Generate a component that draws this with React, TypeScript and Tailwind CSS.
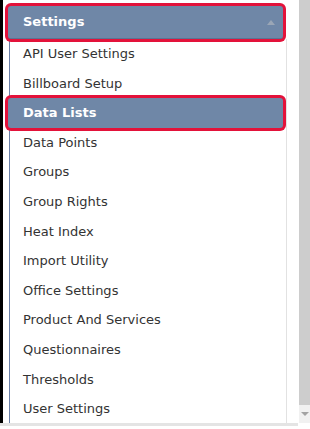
import React from 'react';

const items = [
  'API User Settings',
  'Billboard Setup',
  'Data Lists',
  'Data Points',
  'Groups',
  'Group Rights',
  'Heat Index',
  'Import Utility',
  'Office Settings',
  'Product And Services',
  'Questionnaires',
  'Thresholds',
  'User Settings',
];

const selected = 'Data Lists';

const App = () => {
  return (
    <div className="w-[310px] h-[429px] bg-white overflow-hidden" style={{ fontFamily: '"DejaVu Sans", Verdana, sans-serif' }}>
      <div className="flex h-[423px]">
        <div className="w-[3px] bg-black shrink-0" />
        <div className="w-[285px] pt-[6px] pl-[5px] shrink-0">
          <div className="relative w-[275px] h-[33px] bg-[#6f87a7] border-b border-[#5b7393] rounded-[3px] ring-[3px] ring-[#e3123a] flex items-center pl-[15px] pr-[8px] justify-between">
            <span className="text-white font-bold text-[13px]">Settings</span>
            <span className="w-0 h-0 border-l-[4px] border-r-[4px] border-b-[5px] border-l-transparent border-r-transparent border-b-[#9aa6b6]" />
          </div>
          <div className="ml-px w-[278px] border-l border-l-[#6b7fa6] border-r border-r-[#e2e2e2] h-[384px]">
            {items.map((item) =>
              item === selected ? (
                <div
                  key={item}
                  className="relative w-[275px] -ml-[2px] h-[29.6px] flex items-center pl-[15px] bg-[#6f87a7] rounded-[3px] ring-[3px] ring-[#e3123a]"
                >
                  <span className="text-white font-bold text-[13px]">{item}</span>
                </div>
              ) : (
                <div key={item} className="h-[29.6px] flex items-center pl-[13px]">
                  <span className="text-[#333] text-[13px]">{item}</span>
                </div>
              )
            )}
          </div>
        </div>
        <div className="flex-1" />
        <div className="w-[11px] flex flex-col bg-[#f1f1f1]">
          <div className="h-[405px] bg-[#cdcdcd]" />
          <div className="flex-1 flex items-center justify-center">
            <span className="w-0 h-0 border-l-[4px] border-r-[4px] border-t-[4px] border-l-transparent border-r-transparent border-t-[#a3a3a3]" />
          </div>
        </div>
      </div>
      <div className="w-[298px] h-[3px] bg-[#e4e4e4]" />
    </div>
  );
};

export default App;
